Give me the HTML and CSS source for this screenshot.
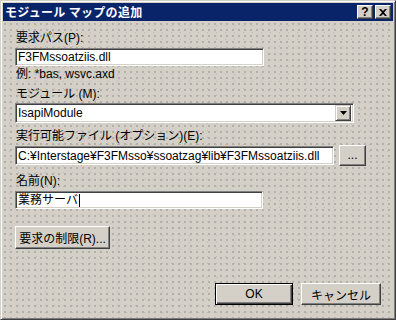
FILE: index.html
```html
<!DOCTYPE html>
<html lang="ja">
<head>
<meta charset="utf-8">
<title>モジュール マップの追加</title>
<link rel="stylesheet" href="styles.css">
</head>
<body>
<div class="window">
  <div class="titlebar">
    <span class="title">モジュール マップの追加</span>
    <div class="caption-buttons">
      <div class="cap-btn help">?</div>
      <div class="cap-btn close">
        <svg width="8" height="7" viewBox="0 0 8 7"><path d="M0 0h2l2 2 2-2h2L5 3.5 8 7H6L4 5 2 7H0l3-3.5z" fill="#000"/></svg>
      </div>
    </div>
  </div>
  <div class="content">
    <div class="label l1">要求パス(P):</div>
    <div class="field f1"><span class="val">F3FMssoatziis.dll</span></div>
    <div class="hint">例: *bas, wsvc.axd</div>
    <div class="label l2">モジュール (M):</div>
    <div class="combo">
      <span class="val">IsapiModule</span>
      <div class="drop"><svg width="7" height="4" viewBox="0 0 7 4"><path d="M0 0h7L3.5 4z" fill="#000"/></svg></div>
    </div>
    <div class="label l3">実行可能ファイル (オプション)(E):</div>
    <div class="row">
      <div class="field f3"><span class="val">C:¥Interstage¥F3FMsso¥ssoatzag¥lib¥F3FMssoatziis.dll</span></div>
      <div class="btn browse">...</div>
    </div>
    <div class="label l4">名前(N):</div>
    <div class="field f4"><span class="val">業務サーバ</span><span class="caret"></span></div>
    <div class="btn restrict">要求の制限(R)...</div>
    <div class="footer">
      <div class="btn ok default">OK</div>
      <div class="btn cancel">キャンセル</div>
    </div>
  </div>
</div>
</body>
</html>
```
FILE: styles.css
```css
html, body {
  margin: 0;
  padding: 0;
  background: #d4d0c8;
}
body {
  font-family: "Liberation Sans", "Noto Sans CJK JP", sans-serif;
  font-size: 12px;
  color: #000;
}
.window {
  width: 396px;
  height: 320px;
  box-sizing: border-box;
  border-style: solid;
  border-width: 1px;
  border-color: #d4d0c8 #404040 #404040 #d4d0c8;
  padding: 1px;
  box-shadow: inset 1px 1px 0 #fff, inset -1px -1px 0 #808080;
  background-color: #d4d0c8;
  background-image:
    radial-gradient(circle, #b2afa8 0.7px, transparent 1px),
    radial-gradient(circle, #bbb8b1 0.7px, transparent 1px);
  background-size: 6px 6px, 9px 7px;
  background-position: 1px 2px, 4px 0;
  display: flex;
  flex-direction: column;
}
.titlebar {
  height: 18px;
  margin: 1px 1px 0 1px;
  background: #0a246a;
  display: flex;
  align-items: center;
  justify-content: space-between;
  padding: 0 2px 0 2px;
}
.title {
  color: #fff;
  font-weight: bold;
  font-size: 12px;
  font-family: "Noto Sans CJK JP", sans-serif;
  line-height: 18px;
  letter-spacing: 0.3px;
}
.caption-buttons {
  display: flex;
  gap: 2px;
}
.cap-btn {
  width: 16px;
  height: 14px;
  box-sizing: border-box;
  background: #d4d0c8;
  border-style: solid;
  border-width: 1px;
  border-color: #fff #404040 #404040 #fff;
  box-shadow: inset -1px -1px 0 #808080;
  display: flex;
  align-items: center;
  justify-content: center;
  font-weight: bold;
  font-size: 12px;
  line-height: 12px;
  font-family: "Liberation Sans", sans-serif;
}
.content {
  flex: 1;
  display: flex;
  flex-direction: column;
  align-items: flex-start;
  padding: 0 0 0 13px;
}
.label, .hint {
  line-height: 13px;
  height: 13px;
  padding-left: 1px;
  white-space: nowrap;
}
.l1 { margin-top: 11px; }
.hint { margin-top: 2px; }
.l2 { margin-top: 7px; }
.l3 { margin-top: 7px; }
.l4 { margin-top: 9px; }
.field, .combo {
  box-sizing: border-box;
  background: #fff;
  border-style: solid;
  border-width: 1px;
  border-color: #808080 #fff #fff #808080;
  box-shadow: inset 1px 1px 0 #404040, inset -1px -1px 0 #d4d0c8;
  display: flex;
  align-items: center;
  padding-left: 2px;
  white-space: nowrap;
  overflow: hidden;
}
.val { line-height: 14px; }
.f1 { width: 249px; height: 18px; margin-top: 3px; }
.combo {
  width: 339px;
  height: 20px;
  margin-top: 2px;
  justify-content: space-between;
  padding-right: 2px;
}
.drop {
  width: 16px;
  height: 16px;
  box-sizing: border-box;
  background: #d4d0c8;
  border-style: solid;
  border-width: 1px;
  border-color: #d4d0c8 #404040 #404040 #d4d0c8;
  box-shadow: inset 1px 1px 0 #fff, inset -1px -1px 0 #808080;
  display: flex;
  align-items: center;
  justify-content: center;
}
.row {
  display: flex;
  align-items: center;
  gap: 5px;
  margin-top: 2px;
}
.f3 { width: 319px; height: 19px; }
.f4 { width: 248px; height: 18px; margin-top: 3px; }
.caret {
  width: 1px;
  height: 13px;
  background: #000;
  margin-left: 1px;
}
.btn {
  box-sizing: border-box;
  background: #d4d0c8;
  border-style: solid;
  border-width: 1px;
  border-color: #fff #404040 #404040 #fff;
  box-shadow: inset -1px -1px 0 #808080;
  display: flex;
  align-items: center;
  justify-content: center;
  white-space: nowrap;
}
.browse { width: 27px; height: 21px; padding-bottom: 2px; }
.restrict { width: 95px; height: 23px; margin-top: 17px; }
.footer {
  align-self: stretch;
  display: flex;
  justify-content: flex-end;
  gap: 8px;
  margin-top: 34px;
  padding-right: 13px;
}
.ok { width: 78px; height: 22px; }
.cancel { width: 80px; height: 22px; }
.default {
  border: 1px solid #000;
  box-shadow: inset 1px 1px 0 #fff, inset -1px -1px 0 #404040, inset -2px -2px 0 #808080;
}
```
